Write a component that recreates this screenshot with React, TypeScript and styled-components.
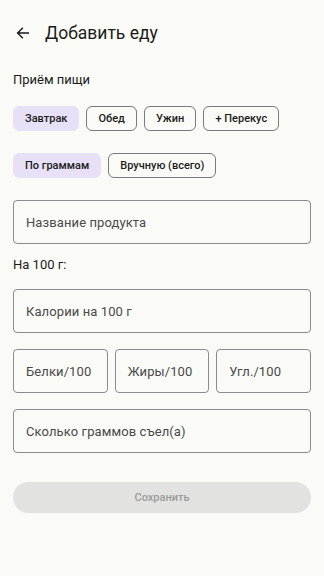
import React, { useState } from 'react';
import styled, { createGlobalStyle } from 'styled-components';

const GlobalStyle = createGlobalStyle`
  html, body {
    margin: 0;
    padding: 0;
    background: #fafbf7;
  }
  body {
    font-family: Roboto, "Noto Sans", "Liberation Sans", sans-serif;
    color: #1b1c1a;
  }
  * {
    box-sizing: border-box;
  }
`;

const Screen = styled.div`
  width: 324px;
  min-height: 576px;
  padding: 0 13px;
  background: #fafbf7;
`;

const TopBar = styled.header`
  display: flex;
  align-items: center;
  height: 66px;
  gap: 14px;
  padding-left: 2px;
`;

const BackButton = styled.button`
  border: none;
  background: none;
  padding: 0;
  width: 16px;
  height: 16px;
  display: flex;
  align-items: center;
  justify-content: center;
  color: #1b1c1a;
`;

const Title = styled.h1`
  margin: 0;
  font-size: 17.5px;
  font-weight: 400;
`;

const Label = styled.div`
  font-size: 13px;
  margin-top: 6px;
  line-height: 16px;
`;

const ChipRow = styled.div<{ $gap?: number }>`
  display: flex;
  gap: 7px;
  margin-top: ${(p) => p.$gap ?? 18}px;
`;

const Chip = styled.button<{ $active?: boolean }>`
  height: 25px;
  padding: 0 11px;
  border-radius: 6px;
  font-family: inherit;
  font-size: 11px;
  font-weight: 500;
  color: #1b1c1a;
  background: ${(p) => (p.$active ? '#e8e0f7' : 'transparent')};
  border: 1px solid ${(p) => (p.$active ? '#e8e0f7' : '#7a7a7a')};
`;

const Field = styled.div`
  height: 44px;
  border: 1px solid #8c8c8c;
  border-radius: 4px;
  display: flex;
  align-items: center;
  padding: 0 12px;
  font-size: 13px;
  color: #4a4a4a;
  letter-spacing: 0.1px;
`;

const Stack = styled.div`
  margin-top: 22px;
`;

const Section = styled.div`
  font-size: 13px;
  margin-top: 13px;
  line-height: 16px;
`;

const Fields = styled.div`
  display: flex;
  flex-direction: column;
  gap: 16px;
  margin-top: 16px;
`;

const Triple = styled.div`
  display: grid;
  grid-template-columns: 1fr 1fr 1fr;
  gap: 7px;
`;

const SaveButton = styled.button`
  margin-top: 29px;
  width: 100%;
  height: 31px;
  border: none;
  border-radius: 16px;
  background: #e2e3e1;
  color: #9b9b9b;
  font-family: inherit;
  font-size: 11px;
  font-weight: 500;
`;

const meals = ['Завтрак', 'Обед', 'Ужин', '+ Перекус'];
const modes = ['По граммам', 'Вручную (всего)'];

export default function App() {
  const [meal, setMeal] = useState(0);
  const [mode, setMode] = useState(0);

  return (
    <Screen>
      <GlobalStyle />
      <TopBar>
        <BackButton aria-label="Назад">
          <svg width="16" height="16" viewBox="0 0 24 24" fill="none">
            <path
              d="M20 12H4M11 5l-7 7 7 7"
              stroke="currentColor"
              strokeWidth="2.2"
              strokeLinecap="square"
            />
          </svg>
        </BackButton>
        <Title>Добавить еду</Title>
      </TopBar>

      <Label>Приём пищи</Label>
      <ChipRow>
        {meals.map((m, i) => (
          <Chip key={m} $active={meal === i} onClick={() => setMeal(i)}>
            {m}
          </Chip>
        ))}
      </ChipRow>

      <ChipRow $gap={22}>
        {modes.map((m, i) => (
          <Chip key={m} $active={mode === i} onClick={() => setMode(i)}>
            {m}
          </Chip>
        ))}
      </ChipRow>

      <Stack>
        <Field>Название продукта</Field>
      </Stack>

      <Section>На 100 г:</Section>

      <Fields>
        <Field>Калории на 100 г</Field>
        <Triple>
          <Field>Белки/100</Field>
          <Field>Жиры/100</Field>
          <Field>Угл./100</Field>
        </Triple>
        <Field>Сколько граммов съел(а)</Field>
      </Fields>

      <SaveButton disabled>Сохранить</SaveButton>
    </Screen>
  );
}
